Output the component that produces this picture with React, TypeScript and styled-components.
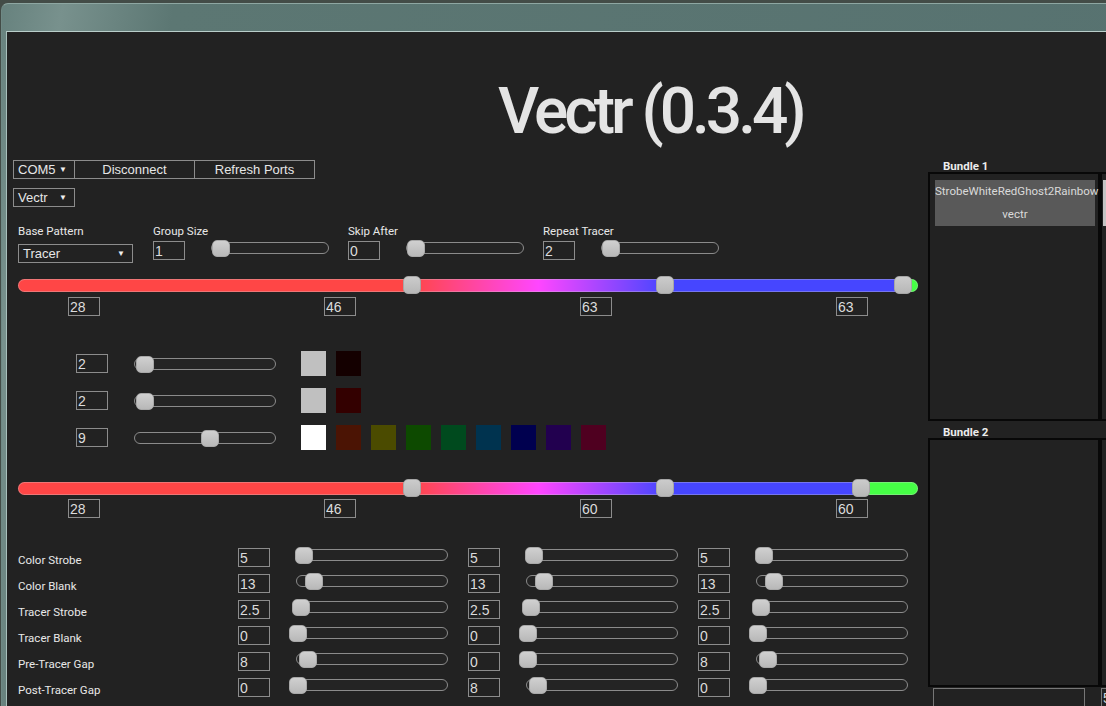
import React from 'react';
import styled, { createGlobalStyle } from 'styled-components';

const GlobalStyle = createGlobalStyle`
  html, body {
    margin: 0;
    padding: 0;
    background: #434c47;
  }
  body {
    font-family: Roboto, "Liberation Sans", sans-serif;
  }
  * {
    box-sizing: border-box;
  }
`;

// ---- data ----

const paramGroups = [
  { label: 'Group Size', value: 1 },
  { label: 'Skip After', value: 0 },
  { label: 'Repeat Tracer', value: 2 },
];

const colorRows = [
  { value: 2, pos: 11, swatches: ['#c0c0c0', '#140000'] },
  { value: 2, pos: 11, swatches: ['#c0c0c0', '#330000'] },
  {
    value: 9,
    pos: 76,
    swatches: [
      '#ffffff',
      '#4b1404',
      '#4b4b00',
      '#0d4a00',
      '#004a1e',
      '#00334f',
      '#00004f',
      '#22004f',
      '#4f0020',
    ],
  },
];

const timingRows: [string, number[]][] = [
  ['Color Strobe', [5, 5, 5]],
  ['Color Blank', [13, 13, 13]],
  ['Tracer Strobe', [2.5, 2.5, 2.5]],
  ['Tracer Blank', [0, 0, 0]],
  ['Pre-Tracer Gap', [8, 0, 8]],
  ['Post-Tracer Gap', [0, 8, 0]],
];

// ---- window chrome ----

const Desktop = styled.div`
  width: 1106px;
  height: 706px;
  overflow: hidden;
  background: #434c47;
  padding: 3px 0 0 1px;
`;

const Window = styled.div`
  height: 100%;
  border-top-left-radius: 7px;
  border-top: 1px solid #8ea7a2;
  border-left: 1px solid #6f8985;
  padding: 27px 0 0 4px;
  background: linear-gradient(
    100deg,
    #67827e 0,
    #78918d 60px,
    #5c7773 170px,
    #577270 100%
  );
`;

const Content = styled.div`
  height: 100%;
  border-top: 1px solid #b9ceca;
  border-left: 1px solid #a9c0bc;
  background: #222222;
  display: flex;
  flex-direction: column;
`;

const Header = styled.header`
  height: 128px;
  padding: 48px 0 0 491px;
  flex: none;
`;

const Title = styled.h1`
  margin: 0;
  font-family: Roboto, sans-serif;
  font-weight: 500;
  font-size: 64px;
  line-height: 64px;
  letter-spacing: -4px;
  color: #e4e4e4;
  white-space: nowrap;
`;

const Body = styled.div`
  display: flex;
  align-items: flex-start;
`;

const Main = styled.main`
  width: 921px;
  flex: none;
`;

// ---- generic controls ----

const Toolbar = styled.div`
  display: flex;
  margin-left: 6px;
  height: 19px;
`;

const Dropdown = styled.div<{ $w: number }>`
  width: ${(p) => p.$w}px;
  height: 19px;
  flex: none;
  display: flex;
  align-items: center;
  justify-content: space-between;
  padding: 0 7px 0 4px;
  border: 1px solid #8c8c8c;
  color: #e6e6e6;
  font-family: "Liberation Sans", Arial, sans-serif;
  font-size: 13px;
`;

const Arrow = styled.span`
  font-size: 8px;
  color: #f0f0f0;
`;

const Button = styled.button`
  width: 120px;
  height: 19px;
  padding: 0;
  border: 1px solid #8c8c8c;
  border-left: none;
  background: transparent;
  color: #e6e6e6;
  font-family: "Liberation Sans", Arial, sans-serif;
  font-size: 13px;
`;

const SecondRow = styled.div`
  margin: 9px 0 0 6px;
`;

const NumberBox = styled.input`
  width: 32px;
  height: 19px;
  flex: none;
  margin: 0;
  padding: 0 1px;
  border: 1px solid #8c8c8c;
  background: transparent;
  color: #dcdcdc;
  font-family: "Liberation Sans", Arial, sans-serif;
  font-size: 14px;
  outline: none;
`;

const Track = styled.div<{ $w: number }>`
  position: relative;
  flex: none;
  width: ${(p) => p.$w}px;
  height: 12px;
  margin-top: 1px;
  border: 1px solid #8b8b8b;
  border-radius: 6px;
  background: #242424;
`;

const Thumb = styled.div`
  position: absolute;
  top: -3px;
  width: 18px;
  height: 17px;
  border-radius: 5px;
  border: 1px solid #a8a8a8;
  background: linear-gradient(#d0d0d0, #b8b8b8);
`;

const Slider = ({ width, pos }: { width: number; pos: number }) => (
  <Track $w={width}>
    <Thumb style={{ left: pos - 10 }} />
  </Track>
);

const Label = styled.div`
  font-size: 11.5px;
  line-height: 13px;
  color: #e8e8e8;
  white-space: nowrap;
`;

// ---- pattern parameters ----

const Params = styled.section`
  display: flex;
  margin-top: 18px;
  padding-left: 11px;
`;

const ParamGroup = styled.div<{ $w?: number }>`
  width: ${(p) => (p.$w ? `${p.$w}px` : 'auto')};
  flex: none;
  display: flex;
  flex-direction: column;
  gap: 3px;
`;

const ParamRow = styled.div`
  display: flex;
  align-items: flex-start;
  gap: 26px;
`;

const PatternSelect = styled(Dropdown)`
  margin-top: 3px;
`;

// ---- gradient sliders ----

const GradientWrap = styled.div<{ $top: number }>`
  position: relative;
  width: 900px;
  height: 18px;
  margin: ${(p) => p.$top}px 0 0 11px;
`;

const GradientTrack = styled.div`
  position: absolute;
  left: 0;
  right: 0;
  top: 3px;
  height: 13px;
  border-radius: 7px;
  box-shadow: inset 0 0 0 1px rgba(210, 210, 210, 0.35);
`;

const GradientThumb = styled.div`
  position: absolute;
  top: 0;
  width: 18px;
  height: 18px;
  border-radius: 5px;
  background: linear-gradient(#cbcbcb, #b7b7b7);
  border: 1px solid #a6a6a6;
`;

const GradientSlider = ({ stops, top }: { stops: number[]; top: number }) => {
  const [a, b, c] = stops;
  const mid = (a + b) / 2;
  const bg = `linear-gradient(to right, #ff4646 0px, #ff4646 ${a}px, #ff46ff ${mid}px, #4646ff ${b}px, #4646ff ${c}px, #46ff46 ${c}px, #46ff46 100%)`;
  return (
    <GradientWrap $top={top}>
      <GradientTrack style={{ background: bg }} />
      {stops.map((s) => (
        <GradientThumb key={s} style={{ left: s - 9 }} />
      ))}
    </GradientWrap>
  );
};

const ValueRow = styled.div<{ $top: number }>`
  display: flex;
  gap: 224px;
  margin-top: ${(p) => p.$top}px;
  padding-left: 61px;
`;

// ---- colour rows ----

const ColorSet = styled.section`
  display: flex;
  flex-direction: column;
  gap: 12px;
  margin-top: 35px;
  padding-left: 69px;
`;

const ColorRow = styled.div`
  display: flex;
  align-items: center;
  height: 25px;
`;

const ColorSlot = styled.div`
  margin: 0 25px 0 26px;
  display: flex;
`;

const Swatches = styled.div`
  display: flex;
  gap: 10px;
`;

const Swatch = styled.div<{ $c: string }>`
  width: 25px;
  height: 25px;
  background: ${(p) => p.$c};
`;

// ---- timing rows ----

const Timing = styled.section`
  display: flex;
  flex-direction: column;
  gap: 7px;
  margin-top: 30px;
  padding-left: 11px;
`;

const TimingRow = styled.div`
  display: flex;
  align-items: flex-start;
`;

const TimingLabel = styled(Label)`
  width: 220px;
  flex: none;
  padding-top: 5px;
  line-height: 14px;
`;

const TimingCell = styled.div`
  display: flex;
  align-items: flex-start;
  gap: 26px;
  margin-right: 20px;
`;

// ---- bundles ----

const Side = styled.aside`
  display: flex;
  flex: none;
`;

const BundleColumn = styled.div<{ $w: number }>`
  width: ${(p) => p.$w}px;
  flex: none;
`;

const BundleGroup = styled.div<{ $top?: number }>`
  margin-top: ${(p) => p.$top ?? 0}px;
`;

const BundleTitle = styled.div`
  height: 12px;
  padding-left: 15px;
  font-size: 11.5px;
  line-height: 12px;
  font-weight: 700;
  color: #ececec;
  white-space: nowrap;
`;

const BundleBox = styled.div<{ $pad?: string }>`
  height: 249px;
  border: 2px solid #080808;
  padding: ${(p) => p.$pad ?? '6px 3px 0 5px'};
`;

const BundleItem = styled.div<{ $c?: string }>`
  height: 46px;
  background: ${(p) => p.$c ?? '#595959'};
  color: #dadada;
  font-size: 11.5px;
  text-align: center;
  white-space: nowrap;
  display: flex;
  flex-direction: column;
`;

const ItemLine = styled.div`
  height: 23px;
  line-height: 23px;
`;

const BundleInput = styled(NumberBox)<{ $left?: number }>`
  width: 152px;
  margin: 1px 0 0 ${(p) => p.$left ?? 5}px;
  border-color: #777;
`;

export default function App() {
  return (
    <>
      <GlobalStyle />
      <Desktop>
        <Window>
          <Content>
            <Header>
              <Title>Vectr (0.3.4)</Title>
            </Header>
            <Body>
              <Main>
                <Toolbar>
                  <Dropdown $w={62}>
                    COM5 <Arrow>▼</Arrow>
                  </Dropdown>
                  <Button>Disconnect</Button>
                  <Button>Refresh Ports</Button>
                </Toolbar>
                <SecondRow>
                  <Dropdown $w={62}>
                    Vectr <Arrow>▼</Arrow>
                  </Dropdown>
                </SecondRow>

                <Params>
                  <ParamGroup $w={135}>
                    <Label>Base Pattern</Label>
                    <PatternSelect $w={115}>
                      Tracer <Arrow>▼</Arrow>
                    </PatternSelect>
                  </ParamGroup>
                  {paramGroups.map((g) => (
                    <ParamGroup key={g.label} $w={195}>
                      <Label>{g.label}</Label>
                      <ParamRow>
                        <NumberBox defaultValue={g.value} />
                        <Slider width={118} pos={10} />
                      </ParamRow>
                    </ParamGroup>
                  ))}
                </Params>

                <GradientSlider stops={[394, 647, 885]} top={13} />
                <ValueRow $top={3}>
                  {[28, 46, 63, 63].map((v, i) => (
                    <NumberBox key={i} defaultValue={v} />
                  ))}
                </ValueRow>

                <ColorSet>
                  {colorRows.map((r, i) => (
                    <ColorRow key={i}>
                      <NumberBox defaultValue={r.value} />
                      <ColorSlot>
                        <Slider width={142} pos={r.pos} />
                      </ColorSlot>
                      <Swatches>
                        {r.swatches.map((c, j) => (
                          <Swatch key={j} $c={c} />
                        ))}
                      </Swatches>
                    </ColorRow>
                  ))}
                </ColorSet>

                <GradientSlider stops={[394, 647, 843]} top={29} />
                <ValueRow $top={2}>
                  {[28, 46, 60, 60].map((v, i) => (
                    <NumberBox key={i} defaultValue={v} />
                  ))}
                </ValueRow>

                <Timing>
                  {timingRows.map(([label, values]) => (
                    <TimingRow key={label}>
                      <TimingLabel>{label}</TimingLabel>
                      {values.map((v, i) => (
                        <TimingCell key={i}>
                          <NumberBox defaultValue={v} />
                          <Slider width={152} pos={2 + v * 1.2} />
                        </TimingCell>
                      ))}
                    </TimingRow>
                  ))}
                </Timing>
              </Main>

              <Side>
                <BundleColumn $w={172}>
                  <BundleGroup>
                    <BundleTitle>Bundle 1</BundleTitle>
                    <BundleBox>
                      <BundleItem>
                        <ItemLine>StrobeWhiteRedGhost2Rainbow</ItemLine>
                        <ItemLine>vectr</ItemLine>
                      </BundleItem>
                    </BundleBox>
                  </BundleGroup>
                  <BundleGroup $top={5}>
                    <BundleTitle>Bundle 2</BundleTitle>
                    <BundleBox />
                  </BundleGroup>
                  <BundleInput defaultValue="" />
                </BundleColumn>
                <BundleColumn $w={172}>
                  <BundleGroup>
                    <BundleTitle />
                    <BundleBox $pad="6px 3px 0 1px">
                      <BundleItem $c="#c4c4c4" />
                    </BundleBox>
                  </BundleGroup>
                  <BundleGroup $top={5}>
                    <BundleTitle />
                    <BundleBox />
                  </BundleGroup>
                  <BundleInput $left={1} defaultValue="5" />
                </BundleColumn>
              </Side>
            </Body>
          </Content>
        </Window>
      </Desktop>
    </>
  );
}
